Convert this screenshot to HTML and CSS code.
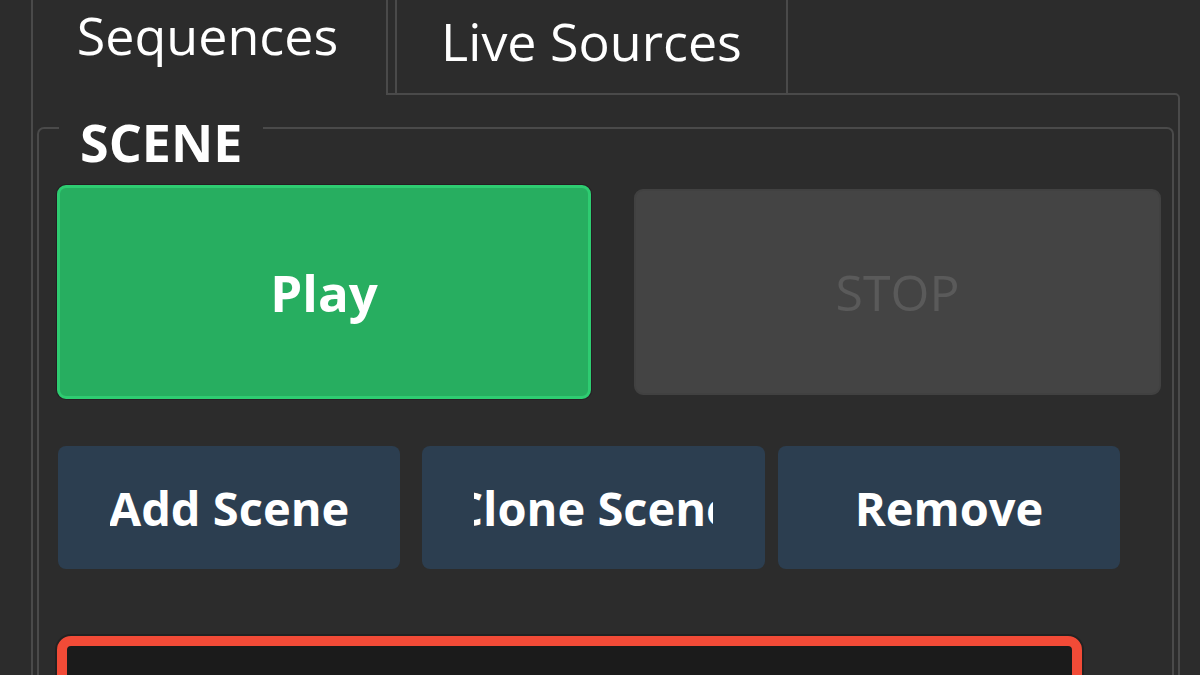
FILE: index.html
```html
<!DOCTYPE html>
<html lang="en">
<head>
  <meta charset="UTF-8">
  <title>Sequences</title>
  <meta name="viewport" content="width=device-width, initial-scale=1">
  <link rel="stylesheet" href="styles.css">
</head>
<body>
  <div class="window">
    <div class="tabs">
      <div class="tab active">Sequences</div>
      <div class="tab">Live Sources</div>
    </div>
    <div class="pane">
      <fieldset class="scene">
        <legend>SCENE</legend>
        <div class="transport">
          <button class="play-btn">Play</button>
          <button class="stop-btn" disabled>STOP</button>
        </div>
        <div class="scene-actions">
          <button class="action-btn add"><span>Add Scene</span></button>
          <button class="action-btn clone"><span>Clone Scene</span></button>
          <button class="action-btn remove"><span>Remove</span></button>
        </div>
        <!-- scene list, selected -->
        <div class="scene-list"></div>
      </fieldset>
    </div>
  </div>
</body>
</html>
```

FILE: styles.css
```css
html, body {
  margin: 0;
  padding: 0;
  height: 100%;
  overflow: hidden;
}
body {
  font-family: 'Open Sans', 'Noto Sans', sans-serif;
  background: #2c2c2c;
  color: #fff;
}
.window {
  padding-left: 31px;
}
.tabs {
  display: flex;
  align-items: flex-start;
}
.tab {
  box-sizing: border-box;
  width: 393px;
  height: 93px;
  margin-left: 7px;
  padding-top: 7px;
  border-left: 2px solid #4a4a4a;
  border-right: 2px solid #4a4a4a;
  font-size: 52px;
  line-height: 68px;
  text-align: center;
  background: #2c2c2c;
}
.tab.active {
  position: relative;
  z-index: 1;
  width: 357px;
  height: 95px;
  margin-left: 0;
  margin-bottom: -2px;
  padding: 1px 4px 0 0;
}
.pane {
  box-sizing: border-box;
  width: 1149px;
  height: 700px;
  border: 2px solid #4a4a4a;
  border-top-right-radius: 5px;
  padding: 21px 4px 0 4px;
}
.scene {
  margin: 0;
  padding: 0 0 0 18px;
  border: 2px solid #4a4a4a;
  border-radius: 7px;
  min-width: 0;
  height: 640px;
}
.scene legend {
  height: 24px;
  margin-left: 2px;
  padding: 0 21px;
  font-size: 52px;
  font-weight: bold;
  line-height: 52px;
}
.transport {
  display: flex;
  gap: 39px;
  margin-top: 45px;
}
.transport button {
  font-family: inherit;
  border-radius: 9px;
  cursor: pointer;
}
.play-btn {
  box-sizing: border-box;
  width: 534px;
  height: 214px;
  background: #27ae60;
  border: 3px solid #2ecc71;
  box-shadow: 0 0 0 1px #241f23;
  color: #fff;
  font-size: 51px;
  font-weight: bold;
}
.stop-btn {
  box-sizing: border-box;
  width: 527px;
  height: 206px;
  margin: 4px 0 4px 4px;
  background: #444;
  border: 2px solid #414141;
  color: #5a5a5a;
  font-size: 50px;
}
.scene-actions {
  display: flex;
  margin-top: 47px;
  padding-left: 1px;
}
.action-btn {
  box-sizing: border-box;
  display: flex;
  align-items: center;
  width: 342px;
  height: 123px;
  padding: 0 52px;
  background: #2c3e50;
  border: none;
  border-radius: 8px;
  color: #fff;
  font-family: inherit;
  font-size: 47px;
  font-weight: bold;
  cursor: pointer;
}
/* label is clipped to the content box when it doesn't fit */
.action-btn span {
  flex: 1;
  min-width: 0;
  display: flex;
  justify-content: center;
  overflow: hidden;
  white-space: nowrap;
}
.action-btn.clone {
  width: 343px;
  margin-left: 22px;
}
.action-btn.remove {
  margin-left: 13px;
}
.scene-list {
  box-sizing: border-box;
  width: 1025px;
  height: 200px;
  margin-top: 67px;
  background: #1b1b1b;
  border: 10px solid #f24b37;
  border-radius: 14px;
  box-shadow: 0 0 0 2px #222;
}
```
